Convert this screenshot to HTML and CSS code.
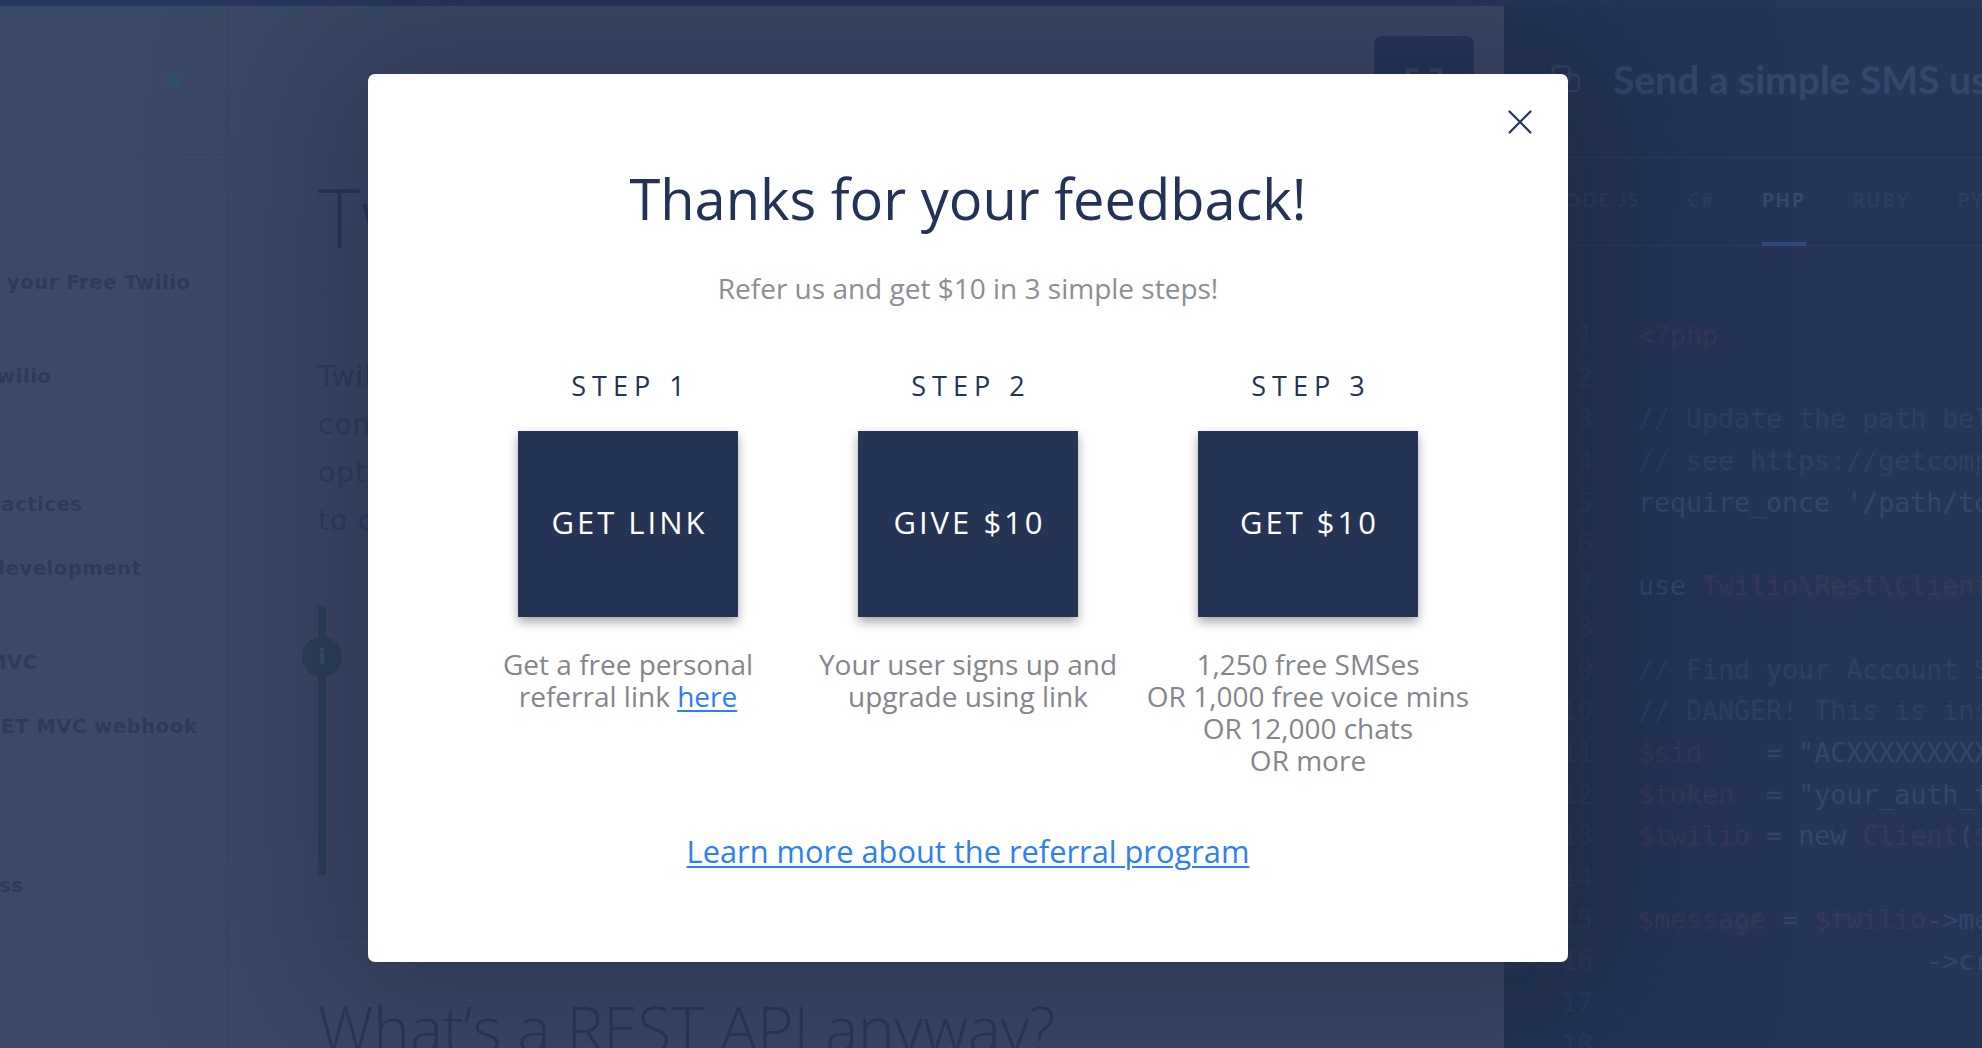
FILE: index.html
```html
<!DOCTYPE html>
<html lang="en">
<head>
<meta charset="utf-8">
<title>Send an SMS with Twilio</title>
<link rel="stylesheet" href="styles.css">
</head>
<body>
<div class="topbar"></div>
<div class="layout">
  <aside class="sidebar">
    <div class="side-head"><span class="dot"></span></div>
    <nav class="side-nav">
      <div class="nav-item n1">your Free Twilio</div>
      <div class="nav-item n2">wilio</div>
      <div class="nav-item n3">ractices</div>
      <div class="nav-item n4">development</div>
      <div class="nav-item n5">MVC</div>
      <div class="nav-item n6">ET MVC webhook</div>
      <div class="nav-item n7">ss</div>
    </nav>
  </aside>

  <main class="main">
    <div class="main-top">
      <div class="expand-btn">
        <svg class="expand-icon" width="36" height="36" viewBox="0 0 36 36" fill="none" stroke="#3a4766" stroke-width="4">
          <path d="M2 12V2h10M24 2h10v10M34 24v10H24M12 34H2V24"/>
        </svg>
      </div>
    </div>
    <h1 class="page-title">Twilio</h1>
    <p class="intro">Twilio<br>con<br>opt<br>to c</p>
    <div class="callout">
      <span class="callout-bar"></span>
      <span class="callout-badge">i</span>
    </div>
    <div class="rule"></div>
    <h2 class="section-title">What’s a REST API anyway?</h2>
  </main>

  <section class="code-panel">
    <div class="code-head">
      <svg class="copy-icon" width="30" height="28" viewBox="0 0 30 28" fill="none" stroke="#34446a" stroke-width="2.5">
        <rect x="1.5" y="1.5" width="17" height="16" rx="4"/>
        <rect x="11" y="10" width="17" height="16" rx="4"/>
      </svg>
      <div class="code-title">Send a simple SMS using PHP</div>
    </div>
    <div class="tabs">
      <span class="tab">NODE.JS</span>
      <span class="tab">C#</span>
      <span class="tab active">PHP</span>
      <span class="tab">RUBY</span>
      <span class="tab">PYTHON</span>
    </div>
    <div class="code">
      <div class="ln"><span class="num">1</span><span class="src"><span class="rd">&lt;?php</span></span></div>
      <div class="ln"><span class="num">2</span><span class="src"></span></div>
      <div class="ln"><span class="num">3</span><span class="src"><span class="cm">// Update the path below to your autoload.php,</span></span></div>
      <div class="ln"><span class="num">4</span><span class="src"><span class="cm">// see https://getcomposer.org/doc/01-basic-usage.md</span></span></div>
      <div class="ln"><span class="num">5</span><span class="src"><span class="kw">require_once</span> <span class="st">'/path/to/vendor/autoload.php'</span>;</span></div>
      <div class="ln"><span class="num">6</span><span class="src"></span></div>
      <div class="ln"><span class="num">7</span><span class="src"><span class="kw">use</span> <span class="rd">Twilio\Rest\Client</span>;</span></div>
      <div class="ln"><span class="num">8</span><span class="src"></span></div>
      <div class="ln"><span class="num">9</span><span class="src"><span class="cm">// Find your Account Sid and Auth Token at twilio.com/console</span></span></div>
      <div class="ln"><span class="num">10</span><span class="src"><span class="cm">// DANGER! This is insecure. See http://twil.io/secure</span></span></div>
      <div class="ln"><span class="num">11</span><span class="src"><span class="rd">$sid</span>    = <span class="st">"ACXXXXXXXXXXXXXXXXXXXXXXXXXXXXXXXX"</span>;</span></div>
      <div class="ln"><span class="num">12</span><span class="src"><span class="rd">$token</span>  = <span class="st">"your_auth_token"</span>;</span></div>
      <div class="ln"><span class="num">13</span><span class="src"><span class="rd">$twilio</span> = <span class="kw">new</span> <span class="rd">Client</span>(<span class="rd">$sid</span>, <span class="rd">$token</span>);</span></div>
      <div class="ln"><span class="num">14</span><span class="src"></span></div>
      <div class="ln"><span class="num">15</span><span class="src"><span class="rd">$message</span> = <span class="rd">$twilio</span>-&gt;messages</span></div>
      <div class="ln"><span class="num">16</span><span class="src">                  -&gt;create(<span class="st">"+15558675310"</span>, <span class="cm">// to</span></span></div>
      <div class="ln"><span class="num">17</span><span class="src"></span></div>
      <div class="ln"><span class="num">18</span><span class="src"></span></div>
    </div>
  </section>
</div>

<div class="modal" role="dialog" aria-labelledby="modal-title">
  <button class="close" aria-label="Close">
    <svg width="24" height="24" viewBox="0 0 24 24" fill="none" stroke="#233356" stroke-width="2.2" stroke-linecap="round">
      <path d="M1.5 1.5L22.5 22.5M22.5 1.5L1.5 22.5"/>
    </svg>
  </button>
  <h2 class="modal-title" id="modal-title">Thanks for your feedback!</h2>
  <p class="modal-sub">Refer us and get $10 in 3 simple steps!</p>
  <div class="steps">
    <div class="step">
      <div class="step-label">STEP 1</div>
      <div class="step-box">GET LINK</div>
      <p class="step-desc">Get a free personal<br>referral link <a href="#" class="link">here</a></p>
    </div>
    <div class="step">
      <div class="step-label">STEP 2</div>
      <div class="step-box">GIVE $10</div>
      <p class="step-desc">Your user signs up and<br>upgrade using link</p>
    </div>
    <div class="step">
      <div class="step-label">STEP 3</div>
      <div class="step-box">GET $10</div>
      <p class="step-desc">1,250 free SMSes<br>OR 1,000 free voice mins<br>OR 12,000 chats<br>OR more</p>
    </div>
  </div>
  <a href="#" class="link learn">Learn more about the referral program</a>
</div>
</body>
</html>
```

FILE: styles.css
```css
* { box-sizing: border-box; margin: 0; padding: 0; }

html, body {
  width: 1982px;
  height: 1048px;
  overflow: hidden;
}

body {
  position: relative;
  background: #3c4966;
  font-family: "Open Sans", "Liberation Sans", sans-serif;
}

.topbar {
  height: 6px;
  background: #27375a;
}

.layout {
  display: grid;
  grid-template-columns: 228px 1276px 478px;
  height: 1042px;
}

/* ---------- sidebar ---------- */
.sidebar {
  background: #3c4966;
  border-right: 1px solid #37445f;
  overflow: hidden;
}

.side-head {
  height: 149px;
  border-bottom: 1px solid #37445f;
  display: flex;
  justify-content: flex-end;
  padding: 67px 46px 0 0;
}

.dot {
  width: 15px;
  height: 15px;
  border-radius: 50%;
  background: #2f5264;
}

.side-nav {
  display: flex;
  flex-direction: column;
  font-family: "DejaVu Sans", "Liberation Sans", sans-serif;
  font-weight: 600;
  font-size: 19.5px;
  line-height: 24px;
  letter-spacing: 0.6px;
  color: #2d3a5a;
  white-space: nowrap;
}

.nav-item { flex: none; }
.n1 { margin-top: 116px; padding-left: 7px; }
.n2 { margin-top: 70px; margin-left: -3px; }
.n3 { margin-top: 104px; margin-left: -9px; }
.n4 { margin-top: 40px; margin-left: -9px; }
.n5 { margin-top: 70px; margin-left: -13px; }
.n6 { margin-top: 40px; margin-left: 1px; }
.n7 { margin-top: 135px; margin-left: -1px; }

/* ---------- main column ---------- */
.main {
  overflow: hidden;
  padding-left: 90px;
  display: flex;
  flex-direction: column;
  background: #3c4966;
}

.main > * { flex: none; }

.main-top {
  height: 100px;
  display: flex;
  justify-content: flex-end;
  padding: 30px 30px 0 0;
}

.expand-btn {
  width: 100px;
  height: 70px;
  border-radius: 8px;
  background: #27365a;
  display: flex;
  justify-content: center;
  padding-top: 32px;
}

.page-title {
  margin-top: 61px;
  font-weight: 300;
  font-size: 82px;
  line-height: 96px;
  color: #283759;
  padding-bottom: 30px;
  border-bottom: 1px solid #37445f;
  white-space: nowrap;
}

.intro {
  margin-top: 59px;
  font-family: "DejaVu Sans", sans-serif;
  font-size: 28px;
  line-height: 48px;
  letter-spacing: 1px;
  color: #2f3d5d;
}

.callout {
  position: relative;
  margin-top: 61px;
  height: 269px;
}

.callout-bar {
  display: block;
  width: 8px;
  height: 100%;
  background: #2c4158;
}

.callout-badge {
  position: absolute;
  left: -16px;
  top: 31px;
  width: 40px;
  height: 40px;
  border-radius: 50%;
  background: #2c4158;
  color: #3a5269;
  font-family: "DejaVu Sans", sans-serif;
  font-weight: bold;
  font-size: 22px;
  line-height: 40px;
  text-align: center;
}

.rule {
  margin-top: 62px;
  border-top: 1px solid #37445f;
}

.section-title {
  margin-top: 54px;
  font-weight: 300;
  font-size: 62px;
  line-height: 72px;
  color: #2a3859;
  white-space: nowrap;
}

/* ---------- code panel ---------- */
.code-panel {
  background: #263556;
  overflow: hidden;
  display: flex;
  flex-direction: column;
}

.code-panel > * { flex: none; }

.code-head {
  height: 152px;
  border-bottom: 1px solid #2d3c5e;
  display: flex;
  align-items: flex-start;
  gap: 32px;
  padding: 50px 0 0 47px;
}

.copy-icon {
  flex: none;
  margin-top: 9px;
}

.code-title {
  font-family: "Lato", "Open Sans", sans-serif;
  font-weight: 700;
  font-size: 39px;
  line-height: 1.2;
  color: #36466a;
  white-space: nowrap;
}

.tabs {
  height: 88px;
  border-bottom: 1px solid #2d3c5e;
  display: flex;
  gap: 47px;
  padding-left: 45px;
  font-family: "Lato", "Open Sans", sans-serif;
  font-weight: 700;
  font-size: 18px;
  letter-spacing: 2.5px;
  color: #2e3d5f;
  white-space: nowrap;
}

.tab {
  flex: none;
  padding-top: 32px;
  height: 88px;
  line-height: 21.6px;
}

.tab.active {
  color: #3a496a;
  border-bottom: 4px solid #2e4a81;
}

.code {
  padding-top: 69px;
  font-family: "DejaVu Sans Mono", "Liberation Mono", monospace;
  font-size: 26.6px;
  line-height: 41.7px;
  color: #33436a;
}

.ln {
  display: flex;
  gap: 45px;
  height: 41.7px;
  white-space: nowrap;
}

.num {
  flex: none;
  width: 89px;
  text-align: right;
  color: #2c3b5d;
}

.src { white-space: pre; }

.rd { color: #363858; }
.cm { color: #2f3e63; }
.kw { color: #35456a; }
.st { color: #35456a; }

/* ---------- modal ---------- */
.modal {
  position: absolute;
  left: 368px;
  top: 74px;
  width: 1200px;
  height: 888px;
  background: #ffffff;
  border-radius: 7px;
  box-shadow: 0 10px 160px 50px rgba(18, 27, 50, 0.35);
  padding-top: 92px;
  display: flex;
  flex-direction: column;
  align-items: center;
  text-align: center;
}

.close {
  position: absolute;
  top: 36px;
  right: 36px;
  width: 24px;
  height: 24px;
  border: 0;
  background: none;
  display: block;
}

.close svg { display: block; }

.modal-title {
  font-weight: 400;
  font-size: 56px;
  line-height: 64px;
  color: #233356;
}

.modal-sub {
  margin-top: 40px;
  font-size: 28px;
  line-height: 36px;
  color: #8b8e94;
}

.steps {
  margin-top: 62px;
  display: grid;
  grid-template-columns: repeat(3, 340px);
}

.step {
  display: flex;
  flex-direction: column;
  align-items: center;
}

.step-label {
  font-size: 27px;
  line-height: 36px;
  letter-spacing: 6px;
  padding-left: 6px;
  color: #233356;
}

.step-box {
  margin-top: 27px;
  width: 220px;
  height: 186px;
  background: #253455;
  box-shadow: 0 5px 10px rgba(0, 0, 0, 0.35);
  display: flex;
  align-items: center;
  justify-content: center;
  padding: 0 0 4px 3px;
  font-size: 31px;
  letter-spacing: 3px;
  color: #ffffff;
}

.step-desc {
  margin-top: 31px;
  font-size: 28px;
  line-height: 32px;
  color: #83868c;
  white-space: nowrap;
}

.link {
  color: #2c80f3;
  text-decoration: underline;
  text-decoration-thickness: 2px;
  text-underline-offset: 3px;
}

.learn {
  margin-top: 55px;
  font-size: 30.8px;
  line-height: 40px;
}
```
